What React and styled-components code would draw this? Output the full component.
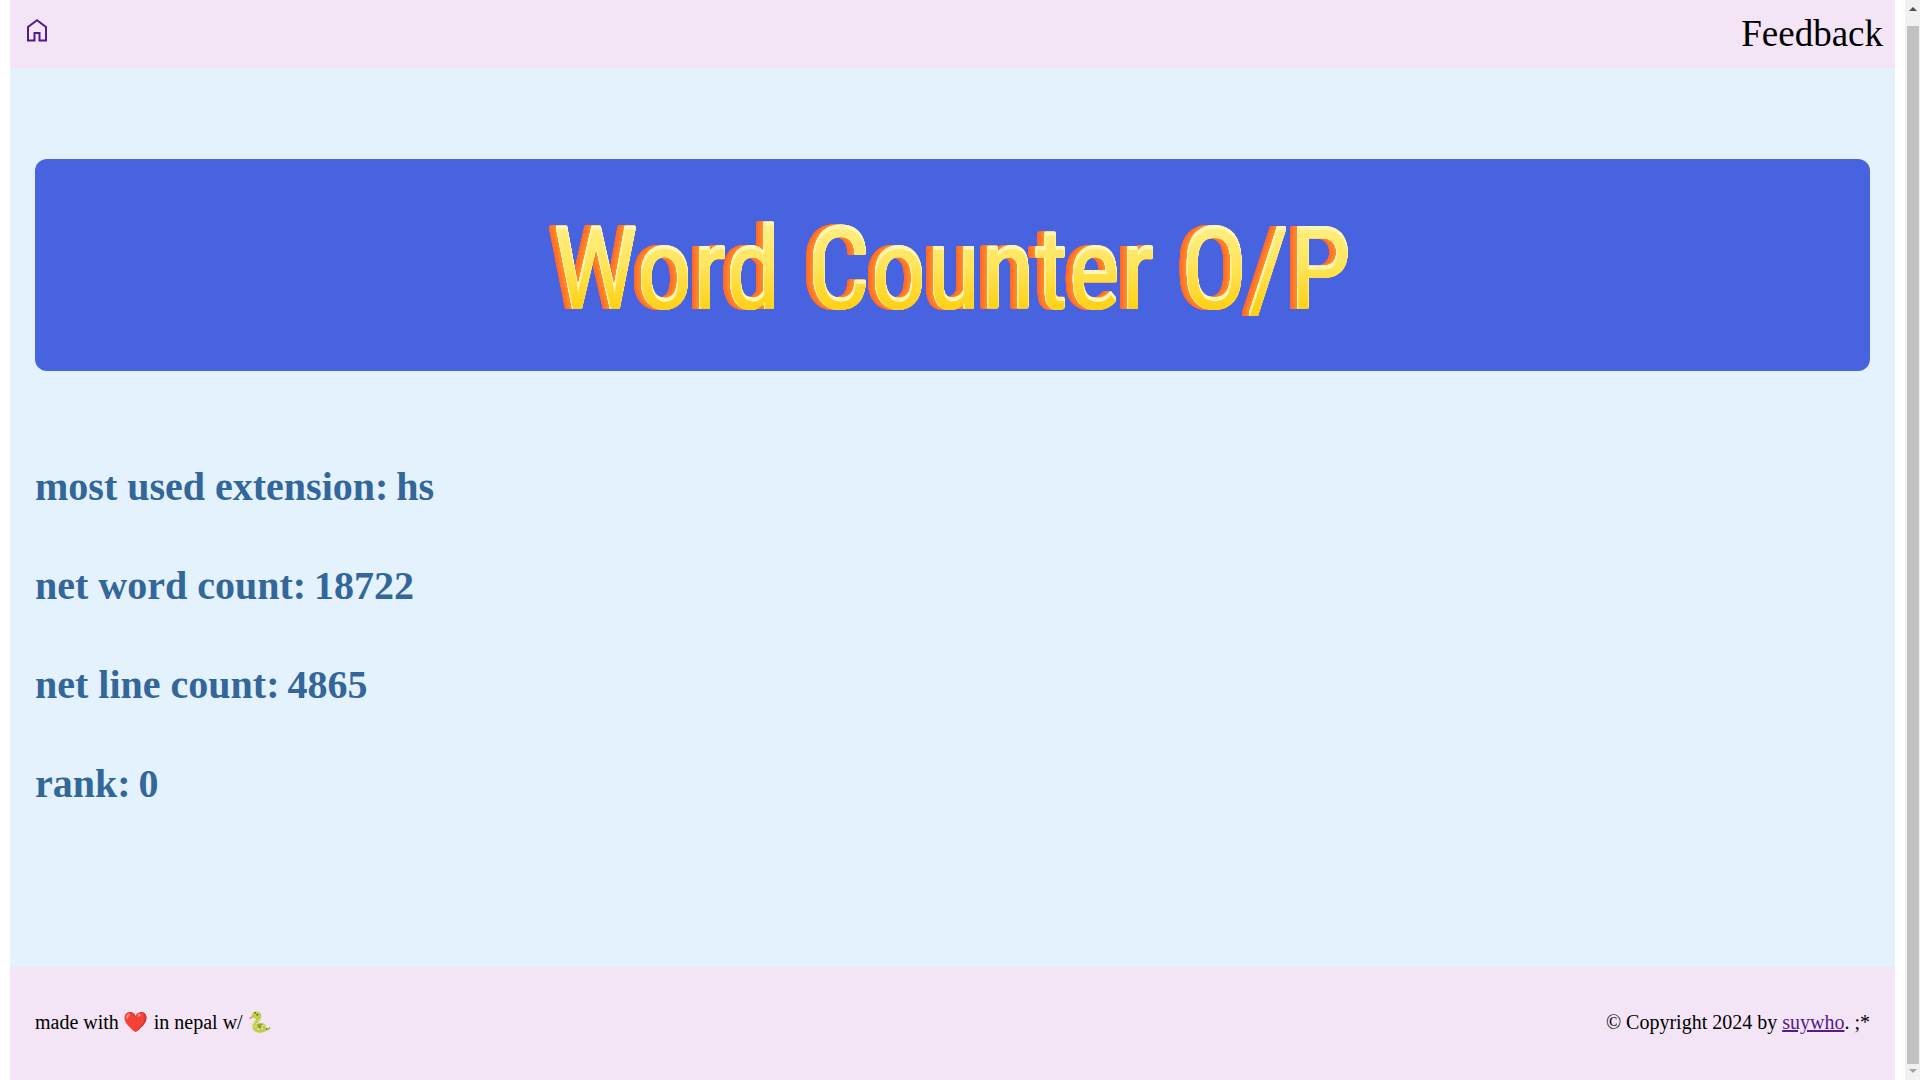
import React from "react";
import styled, { createGlobalStyle } from "styled-components";

const GlobalStyle = createGlobalStyle`
  *, *::before, *::after { box-sizing: border-box; }
  body {
    margin: 0;
    background: #ffffff;
    color: #000000;
    font-family: "Liberation Serif", "Noto Color Emoji", serif;
    font-size: 20px;
    line-height: 23px;
  }
  h1, p, dl, dd, dt { margin: 0; }
`;

const Shell = styled.div`
  display: grid;
  grid-template-columns: minmax(0, 1fr) 15px;
  min-height: 100vh;
`;

const Page = styled.div`
  display: flex;
  flex-direction: column;
  margin: 0 10px;
`;

const TopBar = styled.header`
  display: flex;
  align-items: center;
  justify-content: space-between;
  height: 68px;
  padding: 0 12px 0 15px;
  background: #f3e5f5;
`;

const HomeLink = styled.a`
  display: flex;
  padding-bottom: 8px;
  color: #551a8b;
`;

const FeedbackLink = styled.a`
  color: #000000;
  font-size: 37px;
  line-height: 42px;
  text-decoration: none;
`;

const Main = styled.main`
  flex: 1;
  display: flex;
  flex-direction: column;
  gap: 93px;
  padding: 91px 25px;
  background: #e3f2fd;
`;

const Banner = styled.div`
  display: flex;
  align-items: center;
  justify-content: center;
  height: 212px;
  border-radius: 12px;
  background: #4863e0;
`;

const Title = styled.h1`
  padding: 12px 8px 0;
  font-family: "Roboto Condensed", "DejaVu Sans Mono", monospace;
  font-size: 112px;
  font-weight: 400;
  line-height: 136px;
  color: transparent;
  background: linear-gradient(180deg, #ffee80 25%, #ffe55a 50%, #ffd014 80%);
  background-clip: text;
  -webkit-background-clip: text;
  filter:
    drop-shadow(-1px 0 0 #fff3b0)
    drop-shadow(0 -1px 0 #fff6b0)
    drop-shadow(0 -1px 0 #fff6b0)
    drop-shadow(0 -1px 0 #fff6b0)
    drop-shadow(0 -1px 0 #fff6b0)
    drop-shadow(-1px 0 0 #ff8c26)
    drop-shadow(-1px 0 0 #ff8626)
    drop-shadow(-1px 0 0 #ff8026)
    drop-shadow(-1px 0 0 #ff7a28)
    drop-shadow(-1px 0 0 #ff7428)
    drop-shadow(-1px 0 0 #ff6e28)
    drop-shadow(-1px 0 0 #ff682a);
`;

const Stats = styled.dl`
  display: flex;
  flex-direction: column;
  gap: 54px;
  color: #336699;
  font-size: 40px;
  font-weight: 700;
  line-height: 45px;
`;

const Stat = styled.div`
  display: flex;
  gap: 8px;
`;

const Footer = styled.footer`
  display: flex;
  align-items: center;
  justify-content: space-between;
  height: 113px;
  padding: 0 25px 2px;
  background: #f3e5f5;
`;

const AuthorLink = styled.a`
  color: #551a8b;
`;

const ScrollTrack = styled.div`
  display: grid;
  grid-template-rows: 26px minmax(0, 1fr) 16px;
  justify-items: center;
  height: 100vh;
  background: #f1f1f1;
`;

const ScrollThumb = styled.div`
  width: 12px;
  background: #c1c1c1;
`;

const ScrollArrow = styled.svg`
  display: block;
  width: 15px;
  height: 16px;
  fill: ${(p) => p.$color};
`;

const stats = [
  ["most used extension", "hs"],
  ["net word count", "18722"],
  ["net line count", "4865"],
  ["rank", "0"],
];

export default function App() {
  return (
    <>
      <GlobalStyle />
      <Shell>
        <Page>
          <TopBar>
            <HomeLink href="#home" aria-label="Home">
              <svg width="24" height="24" viewBox="0 0 24 24" fill="none" stroke="currentColor" strokeWidth="2">
                <path d="M12 2.2 L3 8.9 V22.6 H9.5 V14.9 H14.5 V22.6 H21 V8.9 Z" />
              </svg>
            </HomeLink>
            <FeedbackLink href="#feedback">Feedback</FeedbackLink>
          </TopBar>
          <Main>
            <Banner>
              <Title>Word Counter O/P</Title>
            </Banner>
            <Stats>
              {stats.map(([label, value]) => (
                <Stat key={label}>
                  <dt>{label}:</dt>
                  <dd>{value}</dd>
                </Stat>
              ))}
            </Stats>
          </Main>
          <Footer>
            <p>made with ❤️ in nepal w/ 🐍</p>
            <p>
              © Copyright 2024 by <AuthorLink href="#suywho">suywho</AuthorLink>. ;*
            </p>
          </Footer>
        </Page>
        <ScrollTrack aria-hidden="true">
          <ScrollArrow viewBox="0 0 15 16" $color="#505050">
            <path d="M4 11 L8 7 L12 11 Z" />
          </ScrollArrow>
          <ScrollThumb />
          <ScrollArrow viewBox="0 0 15 16" $color="#a3a3a3">
            <path d="M4 5 L8 9 L12 5 Z" />
          </ScrollArrow>
        </ScrollTrack>
      </Shell>
    </>
  );
}
